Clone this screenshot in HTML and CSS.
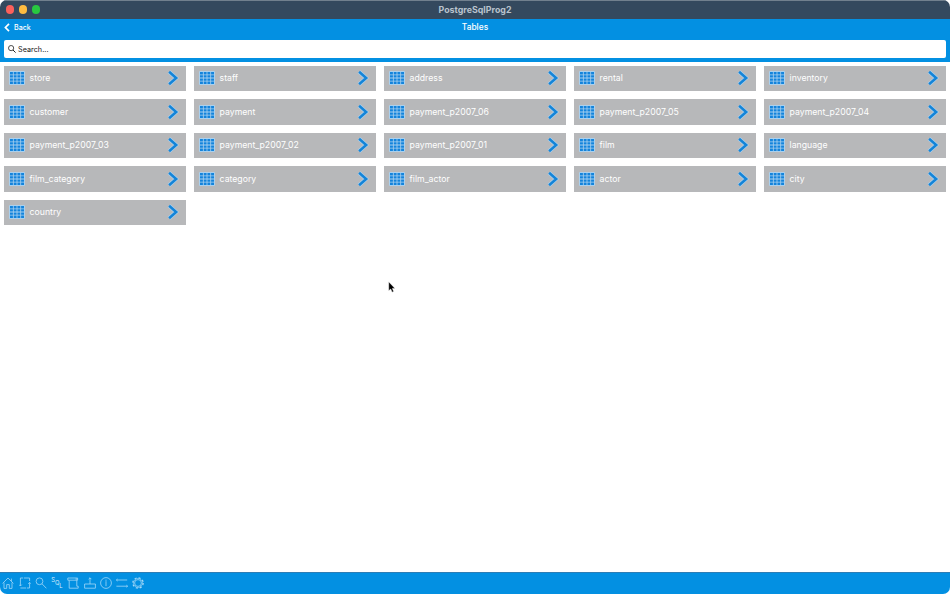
FILE: index.html
```html
<!DOCTYPE html>
<html lang="en">
<head>
    <meta charset="UTF-8">
    <meta name="viewport" content="width=device-width, initial-scale=1.0">
    <title>PostgreSqlProg2</title>
    <link rel="stylesheet" href="styles.css">
</head>
<body>
    <!-- Shared icons -->
    <svg class="symbols">
        <symbol id="icon-table" viewBox="0 0 16 14">
            <rect x="0" y="0" width="16" height="14" rx="1" fill="#a9d0ee"/>
            <path d="M1 1h2.9v2.4H1zM4.7 1h2.9v2.4H4.7zM8.4 1h2.9v2.4H8.4zM12.1 1H15v2.4h-2.9zM1 4.2h2.9v2.4H1zM4.7 4.2h2.9v2.4H4.7zM8.4 4.2h2.9v2.4H8.4zM12.1 4.2H15v2.4h-2.9zM1 7.4h2.9v2.4H1zM4.7 7.4h2.9v2.4H4.7zM8.4 7.4h2.9v2.4H8.4zM12.1 7.4H15v2.4h-2.9zM1 10.6h2.9V13H1zM4.7 10.6h2.9V13H4.7zM8.4 10.6h2.9V13H8.4zM12.1 10.6H15V13h-2.9z" fill="#1484dc"/>
        </symbol>
        <symbol id="icon-arrow" viewBox="0 0 12 16">
            <path d="M2.1 1.7L9.2 8l-7.1 6.3" fill="none" stroke="#a9d0ee" stroke-width="3.9"/>
            <path d="M2.1 1.7L9.2 8l-7.1 6.3" fill="none" stroke="#1484d8" stroke-width="2.5"/>
        </symbol>
    </svg>

    <div class="window">
        <div class="title-bar">
            <div class="lights">
                <span class="light red"></span>
                <span class="light yellow"></span>
                <span class="light green"></span>
            </div>
            <div class="app-name">PostgreSqlProg2</div>
        </div>

        <div class="header">
            <div class="nav">
                <div class="back">
                    <svg width="6" height="9" viewBox="0 0 6 9"><path d="M5 .8L1.4 4.5 5 8.2" fill="none" stroke="#fff" stroke-width="1.7"/></svg>
                    <span>Back</span>
                </div>
                <div class="page-name">Tables</div>
            </div>
            <div class="search">
                <svg width="8" height="8" viewBox="0 0 8 8" fill="none" stroke="#222"><circle cx="3.1" cy="3.1" r="2.6" stroke-width=".8"/><path d="M5 5l2.6 2.6" stroke-width="1"/></svg>
                <span>Search...</span>
            </div>
        </div>

        <div class="tables" id="tables"></div>

        <div class="toolbar">
            <!-- Home -->
            <svg class="tool" viewBox="0 0 12 12"><path d="M.6 6.4L6 1l5.4 5.4M2 5.6v5.8h2.7V7.6h2.6v3.8H10V5.6M9.4 4V1.6"/></svg>
            <!-- Refresh -->
            <svg class="tool" viewBox="0 0 12 12"><path d="M4.2 1H1.4v7.8M5 1h5.6v3M1.4 11h5.8M8 11h2.6V5.6M0 7.6l1.4 1.4 1.4-1.4M9.2 6.8l1.4-1.4L12 6.8"/></svg>
            <!-- Find -->
            <svg class="tool" viewBox="0 0 12 12"><circle cx="4.5" cy="4.3" r="3.4"/><path d="M7 6.8l4.4 4.5"/></svg>
            <div class="tool sql"><span>S</span><span>Q</span><span>L</span></div>
            <!-- Script -->
            <svg class="tool" viewBox="0 0 12 12"><path d="M2.4 3.2H.8V1h8.4v2.2H2.4zM2.2 3.2v8h9v-2H9.8V3.2M9.2 1h1.4v2.2H9.2"/></svg>
            <!-- Import -->
            <svg class="tool" viewBox="0 0 12 12"><path d="M.6 7h10.8v4.2H.6zM6 7V.8M4.6 2.2L6 .8l1.4 1.4"/></svg>
            <!-- Info -->
            <svg class="tool" viewBox="0 0 12 12"><circle cx="6" cy="6" r="5.4"/><path d="M6 4.2v5M6 2.6v1.2"/></svg>
            <!-- Transfer -->
            <svg class="tool" viewBox="0 0 12 12"><path d="M.4 3h10.8M.4 9.2h11.2M1.6 2L.4 3l1.2 1M10.4 8.2l1.2 1-1.2 1"/></svg>
            <!-- Settings -->
            <svg class="tool" viewBox="0 0 12 12"><circle cx="6" cy="6" r="3.4"/><circle cx="6" cy="6" r="4.5"  stroke-width=".6"/><circle cx="6" cy="6" r="5.2" stroke-width="1.2" stroke-dasharray="2.04 2.04"/></svg>
        </div>

        <svg class="pointer" width="8" height="12" viewBox="0 0 8 12"><path d="M.7.8v9l2-1.8 1.4 3.2 1.6-.7L4.4 7.4H7z" fill="#000" stroke="#fff" stroke-width=".5"/></svg>
    </div>

    <script>
        const tables = [
            'store', 'staff', 'address', 'rental', 'inventory',
            'customer', 'payment', 'payment_p2007_06', 'payment_p2007_05', 'payment_p2007_04',
            'payment_p2007_03', 'payment_p2007_02', 'payment_p2007_01', 'film', 'language',
            'film_category', 'category', 'film_actor', 'actor', 'city',
            'country'
        ];

        document.getElementById('tables').innerHTML = tables.map(name => `
            <div class="table-item">
                <svg class="table-icon"><use href="#icon-table"/></svg>
                <span class="table-name">${name}</span>
                <svg class="arrow"><use href="#icon-arrow"/></svg>
            </div>
        `).join('');
    </script>
</body>
</html>
```

FILE: styles.css
```css
* {
    box-sizing: border-box;
}
body {
    margin: 0;
    background-color: #fff;
    font-family: Inter, "Liberation Sans", sans-serif;
}
.symbols {
    display: none;
}
.window {
    position: relative;
    display: flex;
    flex-direction: column;
    height: 594px;
    border-radius: 7px;
    overflow: hidden;
}
.title-bar {
    display: grid;
    grid-template-columns: 1fr auto 1fr;
    align-items: center;
    height: 19px;
    padding: 0 5.5px 1px;
    background-color: #34495e;
    border-top: 1px solid #71808e;
}
.lights {
    display: flex;
    gap: 5px;
}
.light {
    width: 8.2px;
    height: 8.2px;
    border-radius: 50%;
}
.red {
    background-color: #fc605b;
}
.yellow {
    background-color: #fdbc40;
}
.green {
    background-color: #28c840;
}
.app-name {
    color: #b9c3cd;
    font-size: 8.8px;
    font-weight: 700;
    letter-spacing: 0.03px;
}
.header {
    height: 43px;
    padding: 0 4px;
    background-color: #0390e2;
}
.nav {
    display: grid;
    grid-template-columns: 1fr auto 1fr;
    align-items: center;
    height: 16px;
    color: #fff;
}
.back {
    display: flex;
    align-items: center;
    gap: 4px;
    font-size: 7.1px;
    font-weight: 500;
}
.page-name {
    font-size: 8.4px;
    font-weight: 500;
}
.search {
    display: flex;
    align-items: center;
    gap: 2px;
    height: 18.5px;
    margin-top: 4.5px;
    padding: 1px 0 0 4px;
    background-color: #fff;
    border-radius: 2px;
    color: #111;
    font-size: 7.2px;
    letter-spacing: 0.05px;
}
.tables {
    flex: 1;
    display: grid;
    grid-template-columns: repeat(5, 1fr);
    grid-auto-rows: 25.5px;
    align-content: start;
    gap: 8px;
    padding: 3.7px 4px;
}
.table-item {
    display: flex;
    align-items: center;
    padding: 0 7px 0 5px;
    background-color: #b7b8ba;
    color: #fff;
    font-size: 8.7px;
}
.table-icon {
    width: 16px;
    height: 14px;
}
.table-name {
    flex: 1;
    margin-left: 4.6px;
}
.arrow {
    width: 12px;
    height: 16px;
}
.toolbar {
    display: flex;
    align-items: center;
    gap: 4.25px;
    height: 22px;
    padding: 0 0 1px 2.4px;
    background-color: #0390e2;
    border-top: 1px solid #2d7db5;
}
.tool {
    width: 12px;
    height: 12px;
    fill: none;
    stroke: #a5d8f7;
    stroke-width: 0.8;
}
.sql {
    display: flex;
    color: #d5edfb;
    font-size: 5.8px;
    line-height: 6px;
}
.sql span:nth-child(2) {
    margin-top: 3px;
}
.sql span:nth-child(3) {
    margin-top: 6px;
}
.pointer {
    position: absolute;
    left: 388px;
    top: 281px;
}
```
